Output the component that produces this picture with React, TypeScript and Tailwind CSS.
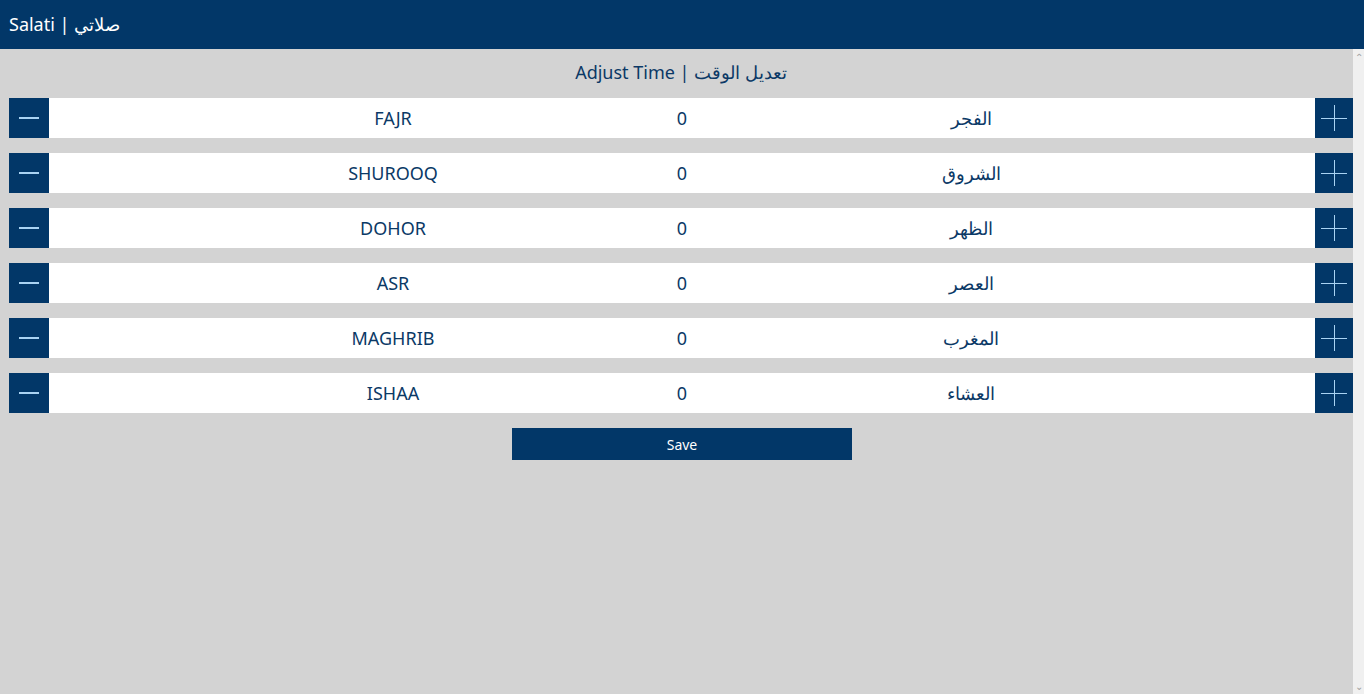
import React from "react";

const prayers = [
  { en: "FAJR", ar: "الفجر" },
  { en: "SHUROOQ", ar: "الشروق" },
  { en: "DOHOR", ar: "الظهر" },
  { en: "ASR", ar: "العصر" },
  { en: "MAGHRIB", ar: "المغرب" },
  { en: "ISHAA", ar: "العشاء" },
];

function Row({ en, ar }: { en: string; ar: string }) {
  return (
    <div className="flex h-10 bg-white">
      <button className="flex h-10 w-10 items-center justify-center bg-[#023768]">
        <span className="block h-[2px] w-5 bg-[#a9d3f3]" />
      </button>
      <div className="grid flex-1 grid-cols-[289px_289px_289px] items-center justify-center text-center text-[18px] text-[#0b3966]">
        <span>{en}</span>
        <span>0</span>
        <span>{ar}</span>
      </div>
      <button className="relative flex h-10 w-[38px] items-center justify-center bg-[#023768]">
        <span className="absolute h-px w-[26px] bg-[#a9d3f3]" />
        <span className="absolute h-[26px] w-px bg-[#a9d3f3]" />
      </button>
    </div>
  );
}

export default function App() {
  return (
    <div className="flex h-[694px] flex-col overflow-hidden bg-[#d3d3d3] font-['Noto_Sans','Open_Sans',sans-serif]">
      <header className="flex h-[49px] shrink-0 items-center bg-[#023768] px-[9px] text-[18px] text-white">
        Salati | صلاتي
      </header>
      <div className="flex flex-1">
        <main className="flex flex-1 flex-col pl-[9px]">
          <h1 className="flex h-[49px] items-center justify-center pb-[2px] text-[18px] text-[#0b3966]">
            Adjust Time | تعديل الوقت
          </h1>
          <div className="flex flex-col gap-[15px]">
            {prayers.map((p) => (
              <Row key={p.en} en={p.en} ar={p.ar} />
            ))}
            <div className="flex justify-center pl-[2px]">
              <button className="h-8 w-[340px] bg-[#023768] text-[14px] text-white">Save</button>
            </div>
          </div>
        </main>
        <div className="flex w-[11px] flex-col items-center justify-between bg-[#f0f0f0] py-[3px] text-[10px] leading-none text-[#a0a0a0]">
          <span>⌃</span>
          <span>⌄</span>
        </div>
      </div>
    </div>
  );
}
